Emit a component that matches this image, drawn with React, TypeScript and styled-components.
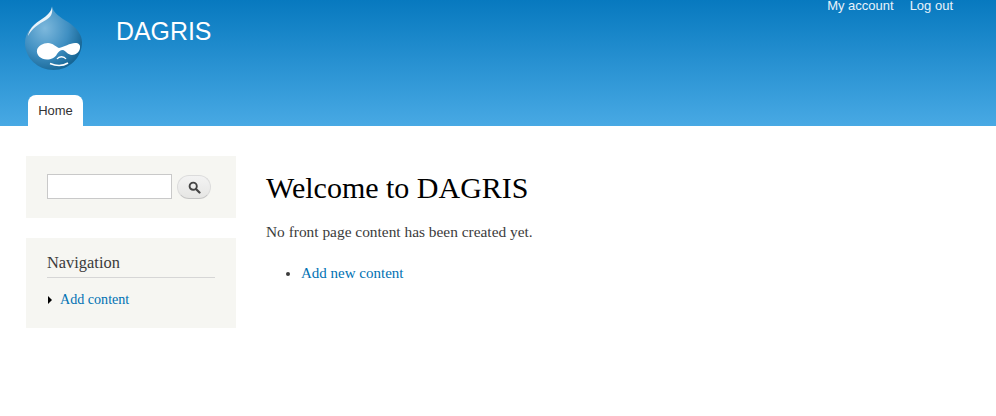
import { createGlobalStyle } from "styled-components"
import styled from "styled-components"

const GlobalStyle = createGlobalStyle`
  html, body {
    margin: 0;
    padding: 0;
    background: #fff;
  }
  body {
    font-family: "Liberation Serif", serif;
    font-size: 15px;
    color: #3b3b3b;
  }
`

const Header = styled.header`
  height: 126px;
  background: linear-gradient(to bottom, #0779bf 0%, #48a9e4 100%);
  display: flex;
  flex-direction: column;
  justify-content: space-between;
  font-family: "Liberation Sans", sans-serif;
`

const TopRow = styled.div`
  display: flex;
  align-items: flex-start;
  padding: 6px 43px 0 25px;
`

const Logo = styled.svg`
  width: 57px;
  height: 64px;
  flex: none;
`

const SiteName = styled.div`
  margin: 11px 0 0 34px;
  font-size: 24.9px;
  line-height: 28px;
  color: #fffeff;
`

const SecondaryMenu = styled.nav`
  margin: -6px 0 0 auto;
  display: flex;
  gap: 16px;
  font-size: 13px;
  line-height: 11px;
  color: #e8f3fb;
`

const Tabs = styled.nav`
  display: flex;
  padding-left: 28px;
`

const Tab = styled.div`
  width: 55px;
  height: 31px;
  background: #fff;
  border-radius: 8px 8px 0 0;
  font-size: 13px;
  line-height: 31px;
  text-align: center;
  color: #333;
`

const Body = styled.div`
  display: flex;
  padding: 30px 26px 0;
`

const Sidebar = styled.aside`
  width: 210px;
  flex: none;
  display: flex;
  flex-direction: column;
  gap: 20px;
`

const SearchBlock = styled.section`
  height: 62px;
  box-sizing: border-box;
  background: #f6f6f2;
  padding: 18px 21px 0;
  display: flex;
  align-items: flex-start;
  gap: 5px;
`

const SearchInput = styled.input`
  width: 125px;
  height: 25px;
  box-sizing: border-box;
  border: 1px solid #c9c9c9;
  background: #fff;
  padding: 0;
  margin: 0;
`

const SearchButton = styled.button`
  width: 34px;
  height: 24px;
  margin: 1px 0 0;
  padding: 0;
  box-sizing: border-box;
  border: 1px solid #dcdcdc;
  border-bottom-color: #c4c4c4;
  border-radius: 12px;
  background: linear-gradient(to bottom, #f3f3f3, #e6e6e4);
  display: flex;
  align-items: center;
  justify-content: center;
`

const NavBlock = styled.section`
  height: 90px;
  box-sizing: border-box;
  background: #f6f6f2;
  padding: 14px 21px 0;
`

const BlockTitle = styled.h2`
  margin: 0;
  height: 26px;
  box-sizing: border-box;
  border-bottom: 1px solid #d6d6d6;
  font-size: 16.4px;
  font-weight: normal;
  line-height: 21px;
  color: #3b3b3b;
`

const NavItem = styled.div`
  margin-top: 12px;
  display: flex;
  align-items: center;
  line-height: 18px;
  font-size: 14.1px;
`

const Arrow = styled.span`
  width: 0;
  height: 0;
  margin: 2px 8px 0 1px;
  border-style: solid;
  border-width: 4px 0 4px 4px;
  border-color: transparent transparent transparent #000;
`

const Link = styled.a`
  color: #0071b3;
  text-decoration: none;
`

const Main = styled.main`
  margin-left: 30px;
  flex: 1;
`

const Title = styled.h1`
  margin: 15px 0 0;
  font-size: 30px;
  font-weight: normal;
  line-height: 34px;
  color: #000;
`

const Paragraph = styled.p`
  margin: 16px 0 0;
  line-height: 22px;
  font-size: 15.4px;
`

const LinkList = styled.ul`
  margin: 19px 0 0;
  padding-left: 35px;
  line-height: 22px;
  font-size: 15px;
`

function DropLogo() {
  return (
    <Logo viewBox="0 0 57 64" aria-label="Home">
      <defs>
        <radialGradient id="drop" cx="35%" cy="35%" r="75%">
          <stop offset="0%" stopColor="#7db8dc" />
          <stop offset="55%" stopColor="#3f8fc2" />
          <stop offset="100%" stopColor="#10608f" />
        </radialGradient>
      </defs>
      <path
        d="M27 0C28 7 35 11 43 16C52 22 57 29 57 36C57 52 44 64 28.5 64C13 64 0 52 0 37C0 26 8 19 15 15C22 11 26 7 27 0Z"
        fill="url(#drop)"
      />
      <path
        d="M27 1C26 7 20 11 14 15C8 19 4 24 3 30C7 22 14 18 21 14C26 11 28 7 27 1Z"
        fill="#e8f3fa"
      />
      <path
        d="M12 44C13 40 18 37 23 37C28 37 31 41 34 42C39 41 45 37 50 37C54 37 55.5 39 55 42C54.5 46 51 49 47 49C43 49 41 45 38 44C35 44 33.5 46 32 48C30 52 26 53.5 22 53.5C16 53.5 11 49 12 44Z"
        fill="#fff"
      />
      <path d="M32 53C34 50 39 50 41 53" fill="none" stroke="#fff" strokeWidth="1.3" />
      <path d="M25 57.5C31 60 38 60 43 57" fill="none" stroke="#fff" strokeWidth="1.6" />
    </Logo>
  )
}

export default function App() {
  return (
    <>
      <GlobalStyle />
      <Header>
        <TopRow>
          <DropLogo />
          <SiteName>DAGRIS</SiteName>
          <SecondaryMenu>
            <span>My account</span>
            <span>Log out</span>
          </SecondaryMenu>
        </TopRow>
        <Tabs>
          <Tab>Home</Tab>
        </Tabs>
      </Header>
      <Body>
        <Sidebar>
          <SearchBlock>
            <SearchInput />
            <SearchButton aria-label="Search">
              <svg width="13" height="13" viewBox="0 0 13 13">
                <circle cx="5.2" cy="5.2" r="3.6" fill="none" stroke="#444" strokeWidth="1.9" />
                <path d="M8 8L11.5 11.5" stroke="#444" strokeWidth="2.2" strokeLinecap="round" />
              </svg>
            </SearchButton>
          </SearchBlock>
          <NavBlock>
            <BlockTitle>Navigation</BlockTitle>
            <NavItem>
              <Arrow />
              <Link href="#">Add content</Link>
            </NavItem>
          </NavBlock>
        </Sidebar>
        <Main>
          <Title>Welcome to DAGRIS</Title>
          <Paragraph>No front page content has been created yet.</Paragraph>
          <LinkList>
            <li>
              <Link href="#">Add new content</Link>
            </li>
          </LinkList>
        </Main>
      </Body>
    </>
  )
}
